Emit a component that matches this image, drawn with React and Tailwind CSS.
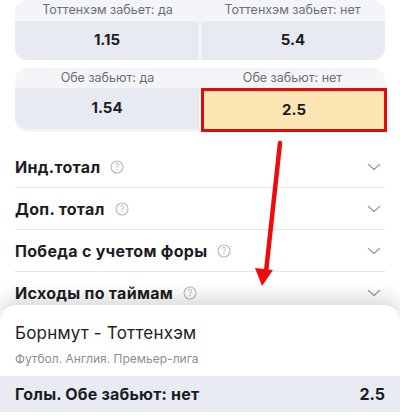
import React from "react";

function Help() {
  return (
    <svg width="14" height="14" viewBox="0 0 14 14" className="ml-2.5 shrink-0">
      <circle cx="7" cy="7" r="6" fill="none" stroke="#b5b9c0" strokeWidth="1.1" />
      <text x="7" y="10.2" textAnchor="middle" fontSize="9" fill="#b5b9c0" fontFamily="Inter, sans-serif">?</text>
    </svg>
  );
}

function Chevron() {
  return (
    <svg width="14" height="10" viewBox="0 0 14 10" className="shrink-0">
      <path d="M1.5 2.5 L7 7.5 L12.5 2.5" fill="none" stroke="#9ea3ab" strokeWidth="1.5" strokeLinecap="round" strokeLinejoin="round" />
    </svg>
  );
}

function Row({ title, last }) {
  return (
    <div className={`flex items-center h-[42px] ${last ? "" : "border-b border-[#e3e5e9]"}`}>
      <span className="text-[16px] font-bold text-[#1b1d22] tracking-[0.3px]">{title}</span>
      <Help />
      <div className="flex-1" />
      <div className="pr-1"><Chevron /></div>
    </div>
  );
}

export default function App() {
  return (
    <div className="relative w-[400px] h-[420px] overflow-hidden bg-white" style={{ fontFamily: "Inter, 'Noto Sans', sans-serif" }}>
      <div className="px-[15px]">
        <div className="rounded-xl overflow-hidden bg-[#f3f5f8]">
          <div className="grid grid-cols-2 h-[21px] items-center text-[12.5px] text-[#6b6f76]">
            <div className="text-center">Тоттенхэм забьет: да</div>
            <div className="text-center">Тоттенхэм забьет: нет</div>
          </div>
          <div className="grid grid-cols-2 gap-[2px] bg-[#f7f8fa]">
            <div className="h-[39px] flex items-center justify-center bg-[#e7ebf1] text-[15px] font-bold text-[#1b1d22]">1.15</div>
            <div className="h-[39px] flex items-center justify-center bg-[#e7ebf1] text-[15px] font-bold text-[#1b1d22]">5.4</div>
          </div>
        </div>
        <div className="mt-[8px] rounded-xl bg-[#f3f5f8]">
          <div className="grid grid-cols-2 h-[20px] items-center text-[12.5px] text-[#6b6f76]">
            <div className="text-center">Обе забьют: да</div>
            <div className="text-center">Обе забьют: нет</div>
          </div>
          <div className="grid grid-cols-2 gap-[2px] rounded-b-xl">
            <div className="h-[41px] flex items-center justify-center bg-[#e7ebf1] rounded-bl-xl text-[15px] font-bold text-[#1b1d22]">1.54</div>
            <div className="h-[44px] -mr-[2px] flex items-center justify-center bg-[#fde6b4] border-[3px] border-[#e00b0b] text-[15px] font-bold text-[#1b1d22]">2.5</div>
          </div>
        </div>
        <div className="mt-[14px]">
          <Row title="Инд.тотал" />
          <Row title="Доп. тотал" />
          <Row title="Победа с учетом форы" />
          <Row title="Исходы по таймам" last />
        </div>
      </div>

      <svg className="absolute left-0 top-0 pointer-events-none" width="400" height="420">
        <line x1="280" y1="143" x2="266" y2="272" stroke="#ee0b0b" strokeWidth="4.5" strokeLinecap="round" />
        <polygon points="255,268 273,270 262,286" fill="#ee0b0b" />
      </svg>

      <div className="absolute left-0 right-0 top-[305px] bottom-0 bg-white rounded-t-2xl shadow-[0_-8px_18px_rgba(0,0,0,0.14)]">
        <div className="px-[15px] pt-[16px] text-[17px] tracking-[0.2px] text-[#1b1d22]">Борнмут - Тоттенхэм</div>
        <div className="px-[15px] mt-[3px] text-[12px] text-[#8a8e95]">Футбол. Англия. Премьер-лига</div>
        <div className="mt-[8px] h-[36px] bg-[#e8ecf2] flex items-center justify-between px-[15px]">
          <span className="text-[16px] font-bold tracking-[0.2px] text-[#1b1d22]">Голы. Обе забьют: нет</span>
          <span className="text-[16px] font-bold text-[#1b1d22]">2.5</span>
        </div>
      </div>
    </div>
  );
}
